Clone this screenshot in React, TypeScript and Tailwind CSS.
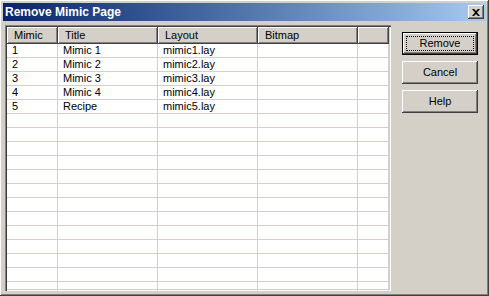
import React from "react";

const ROWS = [
  ["1", "Mimic 1", "mimic1.lay", ""],
  ["2", "Mimic 2", "mimic2.lay", ""],
  ["3", "Mimic 3", "mimic3.lay", ""],
  ["4", "Mimic 4", "mimic4.lay", ""],
  ["5", "Recipe", "mimic5.lay", ""],
];

const EMPTY_ROWS = 13;

const raised =
  "shadow-[inset_-1px_-1px_#404040,inset_1px_1px_#ffffff,inset_-2px_-2px_#808080,inset_2px_2px_#d4d0c8]";

function HeaderCell({ label, w }: { label: string; w: string }) {
  return (
    <div
      className={`${w} h-[17px] shrink-0 bg-[#d4d0c8] pl-[7px] pt-[2px] leading-[13px] ${raised}`}
    >
      {label}
    </div>
  );
}

function Row({ cells }: { cells: string[] }) {
  return (
    <div className="flex h-[14px] border-b border-[#d4d0c8] leading-[13px]">
      <div className="w-[51px] shrink-0 border-r border-[#d4d0c8] pl-[5px]">{cells[0]}</div>
      <div className="w-[100px] shrink-0 border-r border-[#d4d0c8] pl-[5px]">{cells[1]}</div>
      <div className="w-[100px] shrink-0 border-r border-[#d4d0c8] pl-[5px]">{cells[2]}</div>
      <div className="w-[100px] shrink-0 border-r border-[#d4d0c8] pl-[5px]">{cells[3]}</div>
      <div className="w-[31px] shrink-0 border-r border-[#d4d0c8]" />
    </div>
  );
}

function Button({ label, isDefault }: { label: string; isDefault?: boolean }) {
  if (isDefault) {
    return (
      <div className="h-[23px] w-[76px] border border-black">
        <div className={`flex h-full w-full items-center justify-center bg-[#d4d0c8] p-[3px] ${raised}`}>
          <div className="flex h-full w-full items-center justify-center border border-dotted border-black">
            {label}
          </div>
        </div>
      </div>
    );
  }
  return (
    <div className={`flex h-[23px] w-[76px] items-center justify-center bg-[#d4d0c8] ${raised}`}>
      {label}
    </div>
  );
}

export default function App() {
  return (
    <div
      className={`flex h-[296px] w-[489px] flex-col bg-[#d4d0c8] p-[3px] text-[11px] text-black ${raised}`}
      style={{ fontFamily: '"Liberation Sans", Arial, sans-serif' }}
    >
      <div className="flex h-[18px] shrink-0 items-center justify-between bg-gradient-to-r from-[#0a246a] to-[#a6caf0] pl-[2px] pr-[2px]">
        <span className="text-[12px] font-bold text-white">Remove Mimic Page</span>
        <div className={`flex h-[14px] w-[16px] items-center justify-center bg-[#d4d0c8] ${raised}`}>
          <svg width="8" height="7" viewBox="0 0 8 7">
            <path d="M0 0h2l2 2 2-2h2L5 3.5 8 7H6L4 5 2 7H0l3-3.5z" fill="#000" />
          </svg>
        </div>
      </div>

      <div className="mt-[4px] flex flex-1 pl-[2px]">
        <div className="h-[266px] w-[386px] shrink-0 overflow-hidden bg-white shadow-[inset_1px_1px_#808080,inset_2px_2px_#404040,inset_-1px_-1px_#ffffff,inset_-2px_-2px_#d4d0c8] p-[2px]">
          <div className="flex">
            <HeaderCell label="Mimic" w="w-[51px]" />
            <HeaderCell label="Title" w="w-[100px]" />
            <HeaderCell label="Layout" w="w-[100px]" />
            <HeaderCell label="Bitmap" w="w-[100px]" />
            <HeaderCell label="" w="w-[31px]" />
          </div>
          {ROWS.map((r, i) => (
            <Row key={i} cells={r} />
          ))}
          {Array.from({ length: EMPTY_ROWS }).map((_, i) => (
            <Row key={`e${i}`} cells={["", "", "", ""]} />
          ))}
        </div>

        <div className="ml-[11px] mt-[7px] flex flex-col gap-[6px]">
          <Button label="Remove" isDefault />
          <Button label="Cancel" />
          <Button label="Help" />
        </div>
      </div>
    </div>
  );
}
